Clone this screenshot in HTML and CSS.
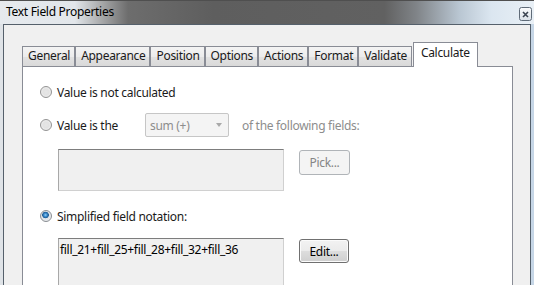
FILE: index.html
```html
<!DOCTYPE html>
<html>
<head>
<meta charset="utf-8">
<link rel="stylesheet" href="styles.css">
</head>
<body>
<div class="window">
  <div class="titlebar">
    <span class="title">Text Field Properties</span>
    <span class="close">
      <svg width="13" height="14" viewBox="0 0 13 14">
        <defs>
          <linearGradient id="cg" x1="0" y1="0" x2="0" y2="1">
            <stop offset="0" stop-color="#fbfcfd"/>
            <stop offset="1" stop-color="#d9e0e7"/>
          </linearGradient>
        </defs>
        <rect x="0.5" y="0.5" width="12" height="13" rx="2" fill="url(#cg)" stroke="#5f6b78"/>
        <path d="M4 5 L9 10 M9 5 L4 10" stroke="#3a4350" stroke-width="1.6"/>
      </svg>
    </span>
  </div>
  <div class="frame">
    <div class="client">
      <div class="tabs">
        <div class="tab">General</div>
        <div class="tab">Appearance</div>
        <div class="tab">Position</div>
        <div class="tab">Options</div>
        <div class="tab">Actions</div>
        <div class="tab">Format</div>
        <div class="tab">Validate</div>
        <div class="tab active">Calculate</div>
      </div>
      <div class="panel">
        <div class="option"><span class="radio"></span><span>Value is not calculated</span></div>
        <div class="option option-select">
          <span class="radio"></span><span class="label-fixed">Value is the</span>
          <div class="select"><span>sum (+)</span><span class="arrow"></span></div>
          <span class="muted">of the following fields:</span>
        </div>
        <div class="fieldrow">
          <div class="box"></div>
          <div class="btn disabled">Pick...</div>
        </div>
        <div class="option option-gap"><span class="radio checked"></span><span>Simplified field notation:</span></div>
        <div class="fieldrow fieldrow-last">
          <div class="box box-tall">fill_21+fill_25+fill_28+fill_32+fill_36</div>
          <div class="btn">Edit...</div>
        </div>
      </div>
    </div>
  </div>
</div>
</body>
</html>
```

FILE: styles.css
```css
html, body {
  margin: 0;
  padding: 0;
}
body {
  width: 534px;
  height: 285px;
  overflow: hidden;
  font-family: "Noto Sans", "Open Sans", sans-serif;
  font-size: 12px;
  letter-spacing: -0.3px;
  color: #1a1a1a;
}
.window {
  width: 534px;
  height: 285px;
  display: flex;
  flex-direction: column;
  background: #dfe4e9;
}
.titlebar {
  height: 24px;
  flex: none;
  box-sizing: border-box;
  border-top: 1px solid #4f4f4f;
  display: flex;
  align-items: center;
  justify-content: space-between;
  padding: 0 2px 0 6px;
  background: linear-gradient(to right,
    #e6eaee 0, #e2e6ea 14%, #a8a9aa 19%, #6d6d6d 24%, #5e5e5e 40%,
    #616161 72%, #808488 78%, #b9c6d2 86%, #dbe6f0 92%, #e9f0f6 100%);
}
.title {
  line-height: 16px;
  color: #000;
  padding-bottom: 2px;
}
.close {
  display: flex;
  margin-top: 3px;
}
.frame {
  flex: 1;
  display: flex;
  padding: 0 3px;
  background: linear-gradient(to right, #dfe3e7 0, #dfe3e7 50%, #c6d6e6 50%, #c6d6e6 100%);
  min-height: 0;
}
.client {
  flex: 1;
  display: flex;
  flex-direction: column;
  border: 1px solid #55606b;
  border-bottom: none;
  background: #f0f0f0;
  padding: 17px 17px 0 18px;
  min-height: 0;
}
.tabs {
  display: flex;
  align-items: flex-end;
  height: 24px;
  flex: none;
  position: relative;
  z-index: 1;
}
.tab {
  height: 20px;
  box-sizing: border-box;
  border: 1px solid #898c95;
  border-bottom: none;
  background: linear-gradient(#f4f4f4, #ececec 50%, #e2e2e2 51%, #d9d9d9);
  padding: 0 4px 0 5px;
  line-height: 18px;
  white-space: nowrap;
}
.tab.active {
  background: #fff;
  padding: 0 7px 0 7px;
  line-height: 20px;
  margin-bottom: -1px;
  margin-left: 1px;
  height: 25px;
}
.panel {
  flex: 1;
  border: 1px solid #898c95;
  background: #fff;
  padding: 17px 0 0 17px;
}
.option {
  display: flex;
  align-items: center;
  height: 16px;
  gap: 5px;
}
.option-select {
  height: 24px;
  margin-top: 13px;
}
.option-gap {
  margin-top: 17px;
}
.radio {
  width: 12px;
  height: 12px;
  box-sizing: border-box;
  border-radius: 50%;
  border: 1px solid #939393;
  background: radial-gradient(circle at 50% 50%, #e6e6e6 0, #e2e2e2 40%, #f7f7f7 100%);
  flex: none;
}
.radio.checked {
  border-color: #8a8e93;
  background: radial-gradient(circle at 45% 40%, #9ad3f5 0, #3f8fd0 1.5px, #1c5a93 3px, #dfe3e7 3.6px, #f2f2f2 100%);
}
.label-fixed {
  width: 83px;
}
.select {
  width: 84px;
  height: 24px;
  box-sizing: border-box;
  border: 1px solid #c6c6c6;
  border-radius: 2px;
  background: #f4f4f4;
  color: #8d8d8d;
  display: flex;
  align-items: center;
  justify-content: space-between;
  padding: 0 6px 0 4px;
}
.arrow {
  width: 0;
  height: 0;
  border-left: 3px solid transparent;
  border-right: 3px solid transparent;
  border-top: 4px solid #a9a9a9;
}
.muted {
  color: #8d8d8d;
  margin-left: 8px;
}
.fieldrow {
  display: flex;
  align-items: flex-start;
  margin-top: 12px;
  padding-left: 18px;
}
.fieldrow-last {
  margin-top: 14px;
}
.box {
  width: 226px;
  height: 42px;
  box-sizing: border-box;
  background: #f0f0f0;
  border: 1px solid #d0d0d0;
  border-top-color: #7d7d7d;
  border-left-color: #a8a8a8;
  padding: 3px 1px;
  line-height: 16px;
  color: #000;
}
.box-tall {
  height: 50px;
}
.btn {
  margin-left: 15px;
  margin-top: 1px;
  width: 50px;
  height: 24px;
  box-sizing: border-box;
  border: 1px solid #707070;
  border-radius: 3px;
  background: linear-gradient(#f2f2f2, #ebebeb 48%, #dddddd 52%, #cfcfcf);
  display: flex;
  align-items: center;
  justify-content: center;
  color: #000;
  box-shadow: inset 0 0 0 1px #fbfbfb;
}
.btn.disabled {
  width: 51px;
  height: 25px;
  border-color: #b0b4b8;
  background: #f4f4f4;
  color: #858585;
  box-shadow: none;
}
```
